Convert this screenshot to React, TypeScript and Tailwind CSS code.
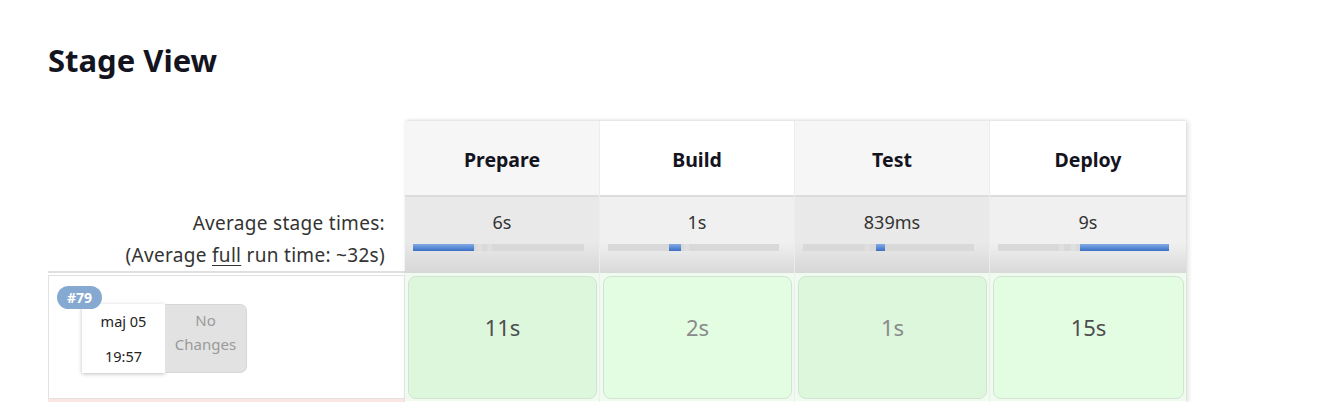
type Stage = {
  name: string;
  avg: string;
  run: string;
  faded: boolean;
  barStart: number;
  barWidth: number;
  notches: number[];
};

const stages: Stage[] = [
  { name: "Prepare", avg: "6s", run: "11s", faded: false, barStart: 0, barWidth: 61, notches: [64, 74] },
  { name: "Build", avg: "1s", run: "2s", faded: true, barStart: 61, barWidth: 12, notches: [76] },
  { name: "Test", avg: "839ms", run: "1s", faded: true, barStart: 73, barWidth: 9, notches: [62] },
  { name: "Deploy", avg: "9s", run: "15s", faded: false, barStart: 82, barWidth: 89, notches: [61, 73] },
];

function Bar({ stage }: { stage: Stage }) {
  return (
    <div className="relative ml-[8px] mt-[10px] h-[7px] w-[171px] bg-[#d9d9d9]">
      {stage.notches.map((n) => (
        <div
          key={n}
          className="absolute top-0 h-[7px] w-[5px] bg-[#dfdfdf]"
          style={{ left: n }}
        />
      ))}
      <div
        className="absolute top-0 h-[7px] bg-gradient-to-b from-[#84aae3] via-[#5b8dd6] to-[#3c6fc4]"
        style={{ left: stage.barStart, width: stage.barWidth }}
      />
    </div>
  );
}

export default function App() {
  return (
    <div className="min-h-[402px] bg-white pl-[48px] pt-[42px] text-[#333] font-['Noto_Sans','Open_Sans',sans-serif]">
      <h1 className="text-[31px] font-bold leading-[36px] text-[#14141f]">Stage View</h1>

      <div className="mt-[43px] flex">
        {/* left column */}
        <div className="flex w-[357px] flex-col">
          <div className="h-[76px]" />
          <div className="flex h-[76px] flex-col items-end pr-[20px] text-[19px] leading-[32px] tracking-[0.3px] text-[#333] border-b-[2px] border-[#e0e0e0]">
            <span className="mt-[10px]">Average stage times:</span>
            <span>
              (Average <span className="underline underline-offset-[3px]">full</span> run time: ~32s)
            </span>
          </div>
          <div className="relative mt-[2px] h-[124px] border border-[#e2e2e2]">
            <span className="absolute left-[8px] top-[10px] z-10 rounded-full bg-[#86a9d1] px-[10px] text-[14px] font-bold leading-[23px] text-white">
              #79
            </span>
            <div className="ml-[33px] mt-[28px] flex">
              <div className="flex h-[69px] w-[83px] flex-col items-center justify-between bg-white py-[6px] text-[14.5px] leading-[22px] text-[#222] shadow-[0_1px_4px_rgba(0,0,0,0.25)]">
                <span>maj 05</span>
                <span>19:57</span>
              </div>
              <div className="flex h-[69px] w-[82px] flex-col items-center rounded-r-[7px] border border-l-0 border-[#d6d6d6] bg-[#e2e2e2] pt-[3px] text-[15px] leading-[24px] text-[#9a9a9a]">
                <span>No</span>
                <span>Changes</span>
              </div>
            </div>
          </div>
          <div className="h-[4px] bg-[#fbe6e4]" />
        </div>

        {/* stage table */}
        <div className="flex shadow-[2px_0_5px_rgba(0,0,0,0.14),0_-1px_2px_rgba(0,0,0,0.05)]">
          {stages.map((s, i) => {
            const odd = i % 2 === 0;
            return (
              <div
                key={s.name}
                className={`flex flex-col ${i < 3 ? "w-[195px] border-r border-[#ededed]" : "w-[196px]"}`}
              >
                <div
                  className={`flex h-[74px] items-center justify-center pt-[3px] text-[19.5px] font-bold text-[#14141f] ${
                    odd ? "bg-[#f6f6f6]" : "bg-white"
                  }`}
                >
                  {s.name}
                </div>
                <div className="h-[2px] bg-[#dcdcdc]" />
                <div
                  className={`h-[76px] pt-[13px] ${
                    odd
                      ? "bg-gradient-to-b from-[#e9e9e9] from-60% to-[#d7d7d7]"
                      : "bg-gradient-to-b from-[#f0f0f0] from-60% to-[#d9d9d9]"
                  }`}
                >
                  <div className="text-center text-[18px] leading-[24px] text-[#333]">{s.avg}</div>
                  <Bar stage={s} />
                </div>
                <div className="h-[128px] bg-[#effbef] pl-[3px] pr-[2px] pt-[3px]">
                  <div
                    className={`flex h-[123px] justify-center rounded-[8px] border border-[#d3e3d3] pt-[35px] text-[22px] leading-[30px] ${
                      odd ? "bg-[#ddf7dd]" : "bg-[#e3fde3]"
                    } ${s.faded ? "text-[#8a8a8a]" : "text-[#4d4d4d]"}`}
                  >
                    {s.run}
                  </div>
                </div>
              </div>
            );
          })}
        </div>
      </div>
    </div>
  );
}
